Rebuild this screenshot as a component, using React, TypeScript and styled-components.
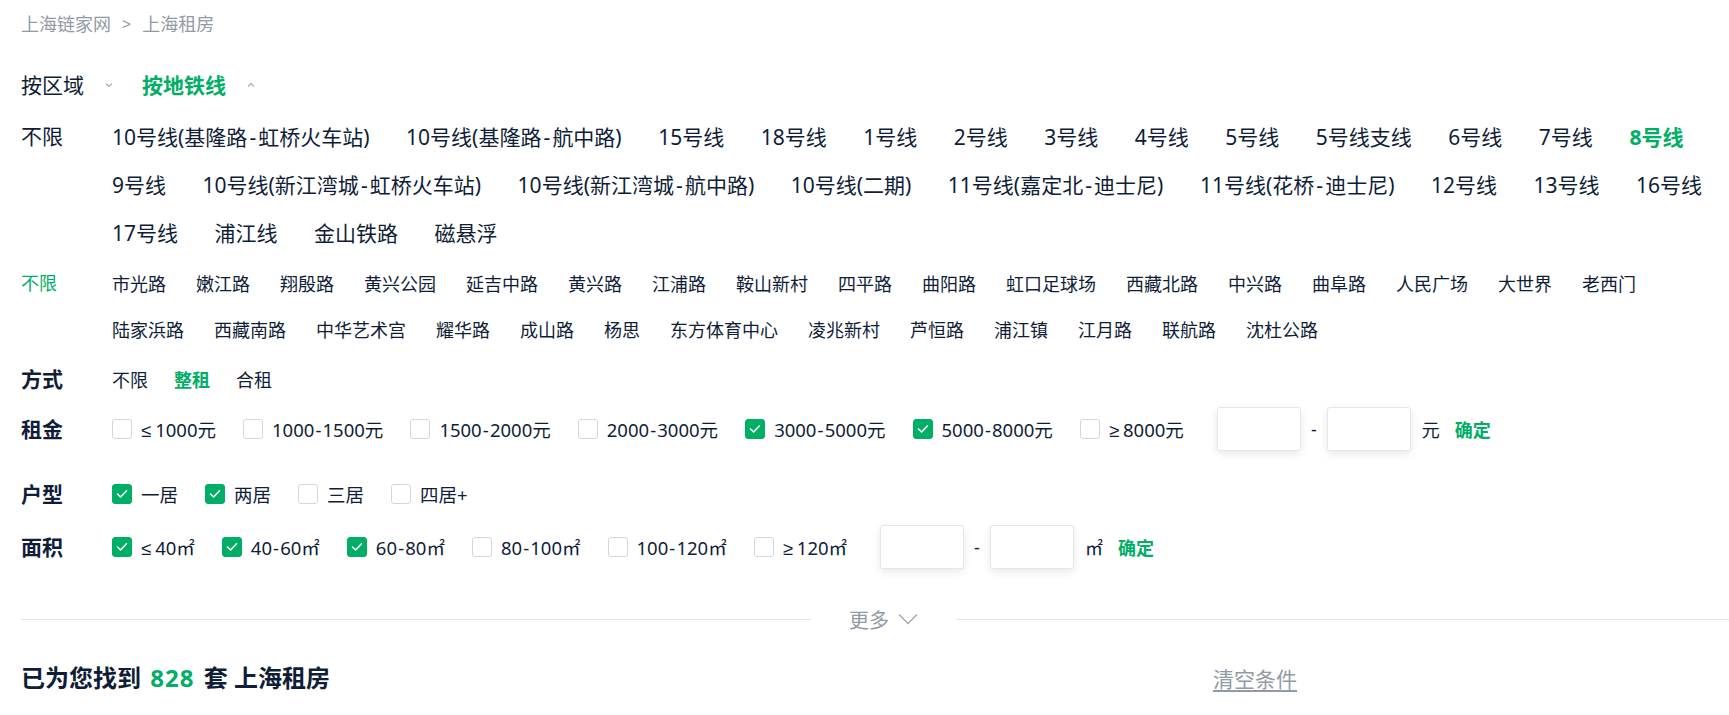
import React from "react";
import styled, { createGlobalStyle } from "styled-components";

const GlobalStyle = createGlobalStyle`
  html, body {
    margin: 0;
    padding: 0;
    background: #ffffff;
    overflow-x: hidden;
  }
  body {
    font-family: "Noto Sans", "Liberation Sans", "Noto Sans CJK SC", sans-serif;
    color: #101d37;
  }
`;

const GREEN = "#00ae66";
const DARK = "#101d37";
const GREY = "#9399a5";

const Page = styled.div`
  width: 1725px;
  padding: 10px 0 40px 21px;
`;

const Breadcrumb = styled.div`
  display: flex;
  align-items: center;
  font-size: 18px;
  line-height: 28px;
  color: ${GREY};
`;

const CrumbSep = styled.span`
  margin: 0 11px 0 11px;
  font-size: 16px;
`;

const Tabs = styled.div`
  display: flex;
  align-items: center;
  margin-top: 33px;
  height: 28px;
`;

const Tab = styled.div<{ $active?: boolean }>`
  display: flex;
  align-items: center;
  font-size: 21px;
  line-height: 28px;
  margin-right: 29px;
  color: ${(p) => (p.$active ? GREEN : DARK)};
  font-weight: ${(p) => (p.$active ? 700 : 400)};
`;

const TabArrow = styled.svg`
  margin-left: 21px;
  width: 8px;
  height: 6px;
`;

const Section = styled.div<{ $top: number }>`
  display: grid;
  grid-template-columns: 91px 1fr;
  margin-top: ${(p) => p.$top}px;
`;

const SideLabel = styled.div<{ $size: number; $h: number; $green?: boolean }>`
  font-size: ${(p) => p.$size}px;
  line-height: ${(p) => p.$h}px;
  color: ${(p) => (p.$green ? GREEN : DARK)};
`;

const Lines = styled.div`
  display: flex;
  flex-direction: column;
`;

const ItemRow = styled.div<{ $h: number; $gap: number }>`
  display: flex;
  align-items: center;
  height: ${(p) => p.$h}px;
  column-gap: ${(p) => p.$gap}px;
  white-space: nowrap;
`;

const Item = styled.span<{ $size: number; $active?: boolean }>`
  font-size: ${(p) => p.$size}px;
  color: ${(p) => (p.$active ? GREEN : DARK)};
  font-weight: ${(p) => (p.$active ? 700 : 400)};
`;

const Hyphen = styled.span<{ $pad: number }>`
  padding: 0 ${(p) => p.$pad}em;
`;

const Compare = styled.span`
  margin-right: 4px;
`;

const FilterRow = styled.div<{ $top: number; $h: number }>`
  display: grid;
  grid-template-columns: 91px 1fr;
  align-items: center;
  height: ${(p) => p.$h}px;
  margin-top: ${(p) => p.$top}px;
`;

const FilterLabel = styled.div`
  font-size: 21px;
  font-weight: 700;
  color: ${DARK};
  line-height: 28px;
`;

const Options = styled.div`
  display: flex;
  align-items: center;
  white-space: nowrap;
`;

const ModeOption = styled.span<{ $active?: boolean }>`
  font-size: 18px;
  margin-right: 26px;
  color: ${(p) => (p.$active ? GREEN : DARK)};
  font-weight: ${(p) => (p.$active ? 700 : 400)};
`;

const CheckItem = styled.label`
  display: inline-flex;
  align-items: center;
  margin-right: 27px;
  font-size: 18.5px;
  color: ${DARK};
`;

const Box = styled.span<{ $checked?: boolean }>`
  box-sizing: border-box;
  width: 20px;
  height: 20px;
  border-radius: 3px;
  margin-right: 9px;
  display: inline-flex;
  align-items: center;
  justify-content: center;
  border: 1px solid ${(p) => (p.$checked ? GREEN : "#d4d6db")};
  background: ${(p) => (p.$checked ? GREEN : "#fff")};
`;

const RangeGroup = styled.div`
  display: flex;
  align-items: center;
  margin-left: 6px;
`;

const RangeInput = styled.div`
  box-sizing: border-box;
  width: 84px;
  height: 44px;
  border: 1px solid #e6e7ea;
  border-radius: 3px;
  background: #fff;
  box-shadow: 0 3px 8px rgba(0, 0, 0, 0.09);
`;

const Dash = styled.span`
  font-size: 18px;
  margin: 0 10px;
  color: ${DARK};
`;

const Unit = styled.span`
  font-size: 18px;
  margin-left: 11px;
  color: ${DARK};
`;

const Confirm = styled.span`
  font-size: 18px;
  font-weight: 700;
  color: ${GREEN};
  margin-left: 15px;
`;

const Divider = styled.div`
  display: flex;
  align-items: center;
  margin-top: 36px;
  height: 28px;
`;

const Rule = styled.div`
  flex: 1;
  height: 1px;
  background: #e4e6ea;
`;

const More = styled.div`
  display: flex;
  align-items: center;
  padding: 0 38px;
  font-size: 20px;
  color: ${GREY};
`;

const MoreArrow = styled.svg`
  margin-left: 9px;
  width: 20px;
  height: 12px;
`;

const ResultRow = styled.div`
  width: 1276px;
  margin-top: 28px;
  display: flex;
  align-items: center;
  justify-content: space-between;
  height: 34px;
`;

const ResultTitle = styled.h2`
  margin: 0;
  font-size: 24px;
  font-weight: 700;
  color: ${DARK};
  line-height: 34px;
`;

const Count = styled.span`
  color: ${GREEN};
  margin: 0 2px;
  letter-spacing: 1px;
`;

const ClearLink = styled.a`
  font-size: 21px;
  color: ${GREY};
  text-decoration: underline;
  text-underline-offset: 3px;
`;

const metroRows: string[][] = [
  [
    "10号线(基隆路-虹桥火车站)",
    "10号线(基隆路-航中路)",
    "15号线",
    "18号线",
    "1号线",
    "2号线",
    "3号线",
    "4号线",
    "5号线",
    "5号线支线",
    "6号线",
    "7号线",
    "8号线",
  ],
  [
    "9号线",
    "10号线(新江湾城-虹桥火车站)",
    "10号线(新江湾城-航中路)",
    "10号线(二期)",
    "11号线(嘉定北-迪士尼)",
    "11号线(花桥-迪士尼)",
    "12号线",
    "13号线",
    "16号线",
  ],
  ["17号线", "浦江线", "金山铁路", "磁悬浮"],
];

const stationRows: string[][] = [
  [
    "市光路",
    "嫩江路",
    "翔殷路",
    "黄兴公园",
    "延吉中路",
    "黄兴路",
    "江浦路",
    "鞍山新村",
    "四平路",
    "曲阳路",
    "虹口足球场",
    "西藏北路",
    "中兴路",
    "曲阜路",
    "人民广场",
    "大世界",
    "老西门",
  ],
  [
    "陆家浜路",
    "西藏南路",
    "中华艺术宫",
    "耀华路",
    "成山路",
    "杨思",
    "东方体育中心",
    "凌兆新村",
    "芦恒路",
    "浦江镇",
    "江月路",
    "联航路",
    "沈杜公路",
  ],
];

const prices = [
  { t: "≤1000元", c: false },
  { t: "1000-1500元", c: false },
  { t: "1500-2000元", c: false },
  { t: "2000-3000元", c: false },
  { t: "3000-5000元", c: true },
  { t: "5000-8000元", c: true },
  { t: "≥8000元", c: false },
];

const layouts = [
  { t: "一居", c: true },
  { t: "两居", c: true },
  { t: "三居", c: false },
  { t: "四居+", c: false },
];

const areas = [
  { t: "≤40㎡", c: true },
  { t: "40-60㎡", c: true },
  { t: "60-80㎡", c: true },
  { t: "80-100㎡", c: false },
  { t: "100-120㎡", c: false },
  { t: "≥120㎡", c: false },
];

const Spaced = ({ text, pad }: { text: string; pad: number }) => {
  const first = text.charAt(0);
  const lead = first === "≤" || first === "≥" ? first : "";
  const rest = lead ? text.slice(1) : text;
  const parts = rest.split("-");
  return (
    <>
      {lead && <Compare>{lead}</Compare>}
      {parts.map((part, i) => (
        <React.Fragment key={i}>
          {i > 0 && <Hyphen $pad={pad}>-</Hyphen>}
          {part}
        </React.Fragment>
      ))}
    </>
  );
};

const Check = ({ label, checked }: { label: string; checked: boolean }) => (
  <CheckItem>
    <Box $checked={checked}>
      {checked && (
        <svg width="12" height="10" viewBox="0 0 12 10">
          <polyline
            points="1.5,5 4.6,8 10.5,1.8"
            fill="none"
            stroke="#fff"
            strokeWidth="1.6"
            strokeLinecap="round"
            strokeLinejoin="round"
          />
        </svg>
      )}
    </Box>
    <Spaced text={label} pad={0.06} />
  </CheckItem>
);

const Chevron = ({ up }: { up?: boolean }) => (
  <TabArrow viewBox="0 0 8 6">
    <polyline
      points={up ? "1,4.5 4,1.5 7,4.5" : "1,1.5 4,4.5 7,1.5"}
      fill="none"
      stroke="#a3a8b2"
      strokeWidth="1.1"
    />
  </TabArrow>
);

export default function App() {
  return (
    <>
      <GlobalStyle />
      <Page>
        <Breadcrumb>
          <span>上海链家网</span>
          <CrumbSep>&gt;</CrumbSep>
          <span>上海租房</span>
        </Breadcrumb>

        <Tabs>
          <Tab>
            按区域
            <Chevron />
          </Tab>
          <Tab $active>
            按地铁线
            <Chevron up />
          </Tab>
        </Tabs>

        <Section $top={13}>
          <SideLabel $size={21} $h={48}>
            不限
          </SideLabel>
          <Lines>
            {metroRows.map((row, i) => (
              <ItemRow key={i} $h={48} $gap={36.5}>
                {row.map((name) => (
                  <Item key={name} $size={21} $active={name === "8号线"}>
                    <Spaced text={name} pad={0.1} />
                  </Item>
                ))}
              </ItemRow>
            ))}
          </Lines>
        </Section>

        <Section $top={4}>
          <SideLabel $size={18} $h={46} $green>
            不限
          </SideLabel>
          <Lines>
            {stationRows.map((row, i) => (
              <ItemRow key={i} $h={46} $gap={30}>
                {row.map((name) => (
                  <Item key={name} $size={18}>
                    {name}
                  </Item>
                ))}
              </ItemRow>
            ))}
          </Lines>
        </Section>

        <FilterRow $top={13} $h={28}>
          <FilterLabel>方式</FilterLabel>
          <Options>
            <ModeOption>不限</ModeOption>
            <ModeOption $active>整租</ModeOption>
            <ModeOption>合租</ModeOption>
          </Options>
        </FilterRow>

        <FilterRow $top={14} $h={44}>
          <FilterLabel>租金</FilterLabel>
          <Options>
            {prices.map((p) => (
              <Check key={p.t} label={p.t} checked={p.c} />
            ))}
            <RangeGroup>
              <RangeInput />
              <Dash>-</Dash>
              <RangeInput />
              <Unit>元</Unit>
              <Confirm>确定</Confirm>
            </RangeGroup>
          </Options>
        </FilterRow>

        <FilterRow $top={29} $h={28}>
          <FilterLabel>户型</FilterLabel>
          <Options>
            {layouts.map((p) => (
              <Check key={p.t} label={p.t} checked={p.c} />
            ))}
          </Options>
        </FilterRow>

        <FilterRow $top={17} $h={44}>
          <FilterLabel>面积</FilterLabel>
          <Options>
            {areas.map((p) => (
              <Check key={p.t} label={p.t} checked={p.c} />
            ))}
            <RangeGroup>
              <RangeInput />
              <Dash>-</Dash>
              <RangeInput />
              <Unit>㎡</Unit>
              <Confirm>确定</Confirm>
            </RangeGroup>
          </Options>
        </FilterRow>

        <Divider>
          <Rule />
          <More>
            更多
            <MoreArrow viewBox="0 0 20 12">
              <polyline
                points="1,1.5 10,10.5 19,1.5"
                fill="none"
                stroke="#a3a8b2"
                strokeWidth="1.4"
              />
            </MoreArrow>
          </More>
          <Rule />
        </Divider>

        <ResultRow>
          <ResultTitle>
            已为您找到<Count> 828 </Count>套 上海租房
          </ResultTitle>
          <ClearLink>清空条件</ClearLink>
        </ResultRow>
      </Page>
    </>
  );
}
